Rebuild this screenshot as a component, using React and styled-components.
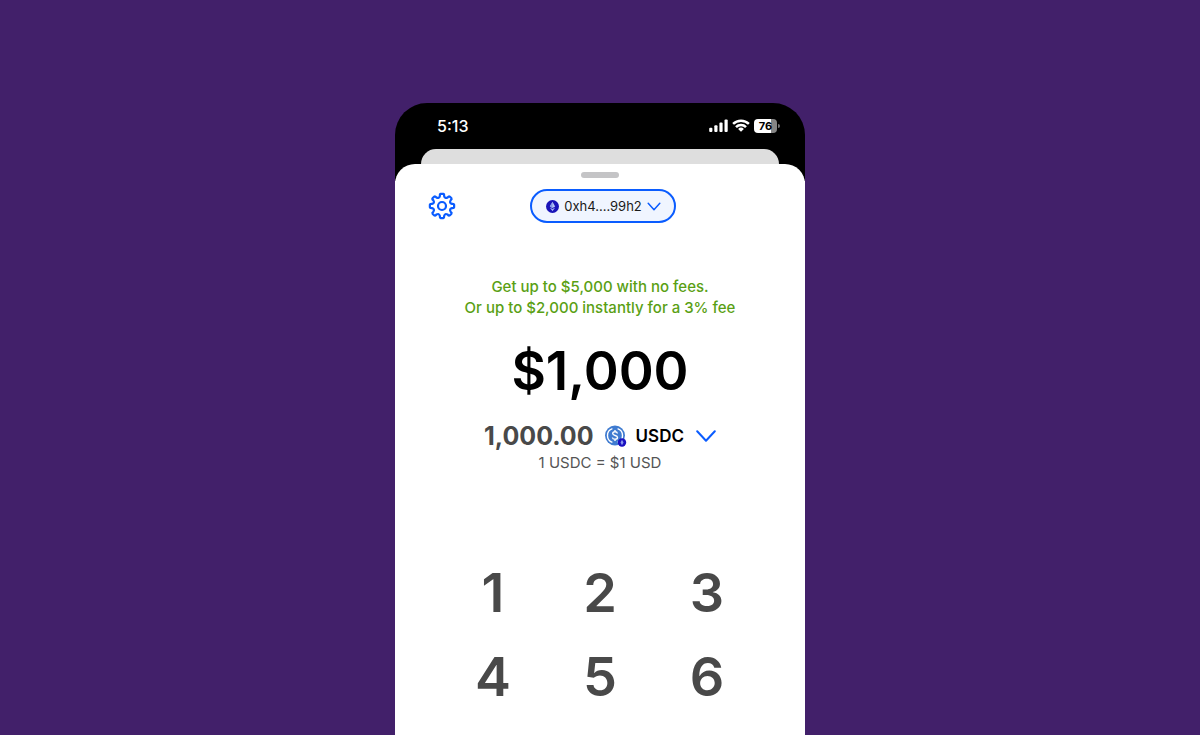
import React from "react";
import styled, { createGlobalStyle } from "styled-components";

const GlobalStyle = createGlobalStyle`
  *, *::before, *::after { box-sizing: border-box; }
  body {
    margin: 0;
    background: #42206a;
    font-family: Inter, "Liberation Sans", sans-serif;
  }
  button { font: inherit; color: inherit; border: 0; padding: 0; background: none; cursor: pointer; }
  h1, p { margin: 0; }
  svg { display: block; flex: none; }
`;

const Page = styled.main`
  min-height: 100vh;
  padding-top: 103px;
  display: flex;
  flex-direction: column;
  align-items: center;
`;

const Phone = styled.section`
  width: 100%;
  max-width: 410px;
  flex: 1;
  display: flex;
  flex-direction: column;
  border-radius: 32px 32px 0 0;
  background: linear-gradient(#000 0 78px, #fff 78px);
  overflow: hidden;
`;

const StatusBar = styled.div`
  height: 46px;
  padding: 0 25px 0 42px;
  display: flex;
  align-items: center;
  justify-content: space-between;
  color: #fff;
`;

const Clock = styled.time`
  font-size: 16px;
  line-height: 20px;
  font-weight: 500;
`;

const Indicators = styled.div`
  display: flex;
  align-items: center;
  gap: 4px;
`;

const Battery = styled.div`
  display: flex;
  align-items: center;
  gap: 1px;
`;

const Charge = styled.span`
  width: 23px;
  height: 14px;
  border-radius: 4px;
  background: linear-gradient(90deg, #fff 76%, #858585 76%);
  color: #000;
  font-size: 11px;
  line-height: 14px;
  font-weight: 700;
  text-align: center;
`;

const BatteryTip = styled.span`
  width: 2px;
  height: 4px;
  border-radius: 0 2px 2px 0;
  background: #757575;
`;

const BackCard = styled.div`
  height: 15px;
  margin: 0 26px;
  border-radius: 20px 20px 0 0;
  background: #dedede;
`;

const Sheet = styled.div`
  flex: 1;
  padding-top: 8px;
  border-radius: 20px 20px 0 0;
  background: #fff;
  display: flex;
  flex-direction: column;
  align-items: center;
`;

const Handle = styled.div`
  width: 38px;
  height: 6px;
  border-radius: 3px;
  background: #c4c4c6;
`;

const Header = styled.header`
  width: 100%;
  margin-top: 11px;
  padding: 0 27px 0 33px;
  display: grid;
  grid-template-columns: 1fr auto 1fr;
  align-items: center;
`;

const IconButton = styled.button`
  justify-self: start;
`;

const WalletButton = styled.button`
  && {
    height: 34px;
    padding: 0 13px 0 14px;
    border: 2px solid #0a5cff;
    border-radius: 17px;
    background: #f0f5ff;
    color: #1a1a1a;
    display: flex;
    align-items: center;
    gap: 5px;
    font-size: 13px;
  }
`;

const Notice = styled.p`
  && { margin-top: 53px; }
  color: #5a9f14;
  font-size: 15px;
  line-height: 21px;
  font-weight: 500;
  text-align: center;
`;

const Amount = styled.h1`
  && { margin-top: 20px; }
  color: #000;
  font-size: 53px;
  line-height: 66px;
  font-weight: 600;
`;

const Conversion = styled.div`
  margin-top: 16px;
  height: 32px;
  display: flex;
  align-items: center;
  gap: 11px;
`;

const Converted = styled.span`
  color: #494949;
  font-size: 25px;
  line-height: 32px;
  font-weight: 700;
`;

const TokenButton = styled.button`
  && {
    display: flex;
    align-items: center;
    gap: 12px;
    color: #000;
    font-size: 17px;
    font-weight: 600;
  }
`;

const TokenName = styled.span`
  display: flex;
  align-items: center;
  gap: 9px;
`;

const Rate = styled.p`
  color: #555;
  font-size: 15px;
  line-height: 22px;
`;

const Keypad = styled.div`
  margin-top: 77px;
  display: grid;
  grid-template-columns: repeat(3, 107px);
`;

const Key = styled.button`
  && {
    height: 84px;
    color: #494949;
    font-size: 54px;
    line-height: 84px;
    font-weight: 600;
  }
`;

const BLUE = "#0a5cff";

function gearOutline() {
  const at = (deg, r) => {
    const t = ((deg - 90) * Math.PI) / 180;
    return `${(14 + r * Math.cos(t)).toFixed(2)} ${(14 + r * Math.sin(t)).toFixed(2)}`;
  };
  let d = "";
  for (let i = 0; i < 8; i += 1) {
    const a = i * 45;
    d += `${i ? "L" : "M"}${at(a - 12, 10.2)} Q${at(a - 11, 12.2)} ${at(a - 6, 12.2)}`;
    d += ` L${at(a + 6, 12.2)} Q${at(a + 11, 12.2)} ${at(a + 12, 10.2)}`;
    d += ` Q${at(a + 22.5, 7.6)} ${at(a + 33, 10.2)} `;
  }
  return `${d}Z`;
}

const Gear = () => (
  <svg width="28" height="28" viewBox="0 0 28 28" fill="none" stroke={BLUE} strokeWidth="2.2" strokeLinejoin="round" aria-hidden="true">
    <path d={gearOutline()} />
    <circle cx="14" cy="14" r="4" />
  </svg>
);

const Signal = () => (
  <svg width="19" height="15" viewBox="0 0 19 15" fill="#fff" aria-hidden="true">
    <rect x="0.2" y="8.7" width="3.2" height="4.3" rx="1" />
    <rect x="5.3" y="6.2" width="3.2" height="6.8" rx="1" />
    <rect x="10.4" y="3.4" width="3.2" height="9.6" rx="1" />
    <rect x="15.5" y="0.6" width="3.2" height="12.4" rx="1" />
  </svg>
);

const Wifi = () => (
  <svg width="18" height="14" viewBox="0 0 18 14" fill="none" stroke="#fff" strokeWidth="2.5" aria-hidden="true">
    <path d="M1.1 4.9a11.2 11.2 0 0 1 15.8 0" />
    <path d="M4 8.1a7 7 0 0 1 10 0" />
    <path d="M9 12.8 6.1 9.9a4.1 4.1 0 0 1 5.8 0Z" fill="#fff" stroke="none" />
  </svg>
);

const Chevron = ({ width, height, stroke }) => (
  <svg width={width} height={height} viewBox={`0 0 ${width} ${height}`} fill="none" stroke={BLUE} strokeWidth={stroke} strokeLinecap="round" strokeLinejoin="round" aria-hidden="true">
    <path d={`M1.2 1.2 L${width / 2} ${height - 1.3} L${width - 1.2} 1.2`} />
  </svg>
);

const Ether = () => (
  <svg width="13" height="13" viewBox="0 0 13 13" aria-hidden="true">
    <circle cx="6.5" cy="6.5" r="6.5" fill="#1a14b8" />
    <path d="M6.5 1.8 9.2 6.5 6.5 8.1 3.8 6.5Z" fill="#b9c6f5" />
    <path d="M6.5 1.8V8.1L3.8 6.5Z" fill="#8397e8" />
    <path d="M3.8 7.4 6.5 9 9.2 7.4 6.5 11.3Z" fill="#a8b6f0" />
  </svg>
);

const UsdCoin = () => (
  <svg width="22" height="22" viewBox="0 0 22 22" fill="none" aria-hidden="true">
    <circle cx="10" cy="10.5" r="10" fill="#3f7bd0" />
    <g stroke="#fff" strokeWidth="1.4">
      <path d="M7.4 3.6a7.3 7.3 0 0 0 0 13.8M12.6 3.6a7.3 7.3 0 0 1 0 13.8" />
      <path d="M12.4 8.5C12.2 7.3 11.4 6.8 10 6.8c-1.5 0-2.3.7-2.3 1.8 0 2.6 4.8 1.2 4.8 3.9 0 1.1-1 1.8-2.5 1.8-1.5 0-2.4-.6-2.6-1.8M10 5v1.8M10 14.3v1.8" />
    </g>
    <circle cx="17" cy="17.5" r="4.2" fill="#1a10c0" />
    <path d="M17 14.8 18.5 17.5 17 20.2 15.5 17.5Z" fill="#8a98ee" />
  </svg>
);

export default function App() {
  return (
    <>
      <GlobalStyle />
      <Page>
        <Phone>
          <StatusBar>
            <Clock>5:13</Clock>
            <Indicators>
              <Signal />
              <Wifi />
              <Battery>
                <Charge>76</Charge>
                <BatteryTip />
              </Battery>
            </Indicators>
          </StatusBar>
          <BackCard />
          <Sheet>
            <Handle />
            <Header>
              <IconButton type="button" aria-label="Settings">
                <Gear />
              </IconButton>
              <WalletButton type="button">
                <Ether />
                0xh4....99h2
                <Chevron width={14} height={9} stroke={1.5} />
              </WalletButton>
            </Header>
            <Notice>
              Get up to $5,000 with no fees.
              <br />
              Or up to $2,000 instantly for a 3% fee
            </Notice>
            <Amount>$1,000</Amount>
            <Conversion>
              <Converted>1,000.00</Converted>
              <TokenButton type="button">
                <TokenName>
                  <UsdCoin />
                  USDC
                </TokenName>
                <Chevron width={20} height={12} stroke={2} />
              </TokenButton>
            </Conversion>
            <Rate>1 USDC = $1 USD</Rate>
            <Keypad>
              {[1, 2, 3, 4, 5, 6].map((digit) => (
                <Key key={digit} type="button">
                  {digit}
                </Key>
              ))}
            </Keypad>
          </Sheet>
        </Phone>
      </Page>
    </>
  );
}
